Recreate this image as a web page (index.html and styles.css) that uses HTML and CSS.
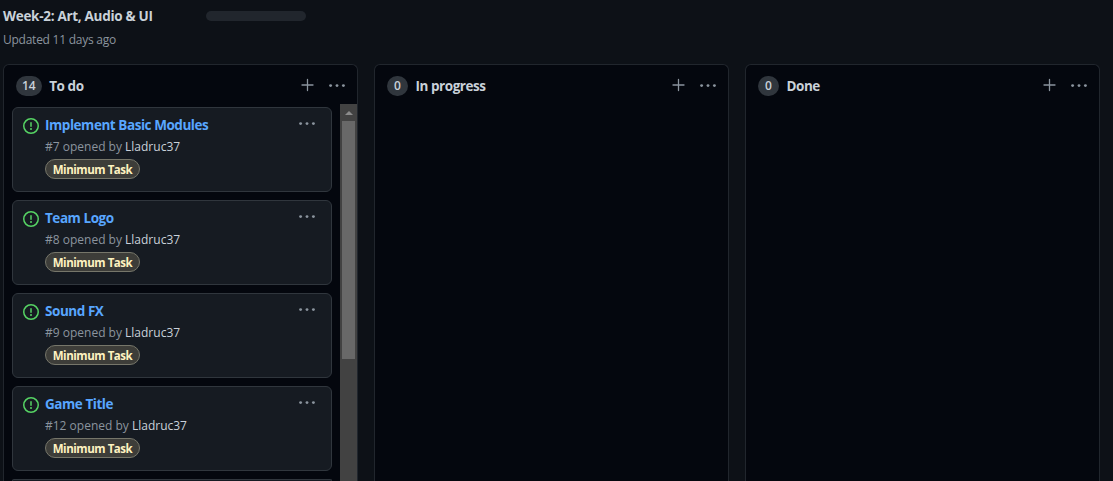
FILE: index.html
```html
<!DOCTYPE html>
<html lang="en">
<head>
<meta charset="utf-8">
<title>Week-2: Art, Audio &amp; UI</title>
<link rel="stylesheet" href="styles.css">
</head>
<body>
<svg class="defs" width="0" height="0" aria-hidden="true">
  <symbol id="plus" viewBox="0 0 16 16"><path d="M7.5 1.5v11M2 7h11" fill="none" stroke="currentColor" stroke-width="1.3" stroke-linecap="round"/></symbol>
  <symbol id="dots" viewBox="0 0 16 16"><circle cx="1.6" cy="7.6" r="1.45"/><circle cx="8" cy="7.6" r="1.45"/><circle cx="14.4" cy="7.6" r="1.45"/></symbol>
  <symbol id="issue" viewBox="0 0 16 16"><circle cx="8" cy="8" r="7.25" fill="none" stroke="currentColor" stroke-width="1.5"/><path d="M8 4.75v3.5" fill="none" stroke="currentColor" stroke-width="1.5" stroke-linecap="round"/><circle cx="8" cy="11" r="1"/></symbol>
</svg>
<header class="header">
  <div class="heading"><h1 class="title">Week-2: Art, Audio &amp; UI</h1><span class="progress"></span></div>
  <p class="updated">Updated 11 days ago</p>
</header>
<main class="board">
  <section class="column">
    <div class="column-head"><span class="count">14</span><h2 class="name">To do</h2><svg class="icon add"><use href="#plus"/></svg><svg class="icon"><use href="#dots"/></svg></div>
    <div class="list">
      <div class="cards">
        <article class="card"><svg class="issue"><use href="#issue"/></svg><div class="body"><h3 class="card-title">Implement Basic Modules</h3><p class="meta">#7 opened by <b class="author">Lladruc37</b></p><span class="label">Minimum Task</span></div><svg class="icon menu"><use href="#dots"/></svg></article>
        <article class="card"><svg class="issue"><use href="#issue"/></svg><div class="body"><h3 class="card-title">Team Logo</h3><p class="meta">#8 opened by <b class="author">Lladruc37</b></p><span class="label">Minimum Task</span></div><svg class="icon menu"><use href="#dots"/></svg></article>
        <article class="card"><svg class="issue"><use href="#issue"/></svg><div class="body"><h3 class="card-title">Sound FX</h3><p class="meta">#9 opened by <b class="author">Lladruc37</b></p><span class="label">Minimum Task</span></div><svg class="icon menu"><use href="#dots"/></svg></article>
        <article class="card"><svg class="issue"><use href="#issue"/></svg><div class="body"><h3 class="card-title">Game Title</h3><p class="meta">#12 opened by <b class="author">Lladruc37</b></p><span class="label">Minimum Task</span></div><svg class="icon menu"><use href="#dots"/></svg></article>
        <article class="card last"></article>
      </div>
      <div class="scrollbar"><span class="arrow"></span><span class="thumb"></span></div>
    </div>
  </section>
  <section class="column">
    <div class="column-head"><span class="count">0</span><h2 class="name">In progress</h2><svg class="icon add"><use href="#plus"/></svg><svg class="icon"><use href="#dots"/></svg></div>
  </section>
  <section class="column">
    <div class="column-head"><span class="count">0</span><h2 class="name">Done</h2><svg class="icon add"><use href="#plus"/></svg><svg class="icon"><use href="#dots"/></svg></div>
  </section>
</main>
</body>
</html>
```
FILE: styles.css
```css
* { box-sizing: border-box; margin: 0; padding: 0; }
body {
  height: 481px;
  overflow: hidden;
  display: flex;
  flex-direction: column;
  background: #0d1117;
  color: #c9d1d9;
  font-family: "Open Sans", "Noto Sans", sans-serif;
  font-size: 14px;
}
.defs { position: absolute; }
svg { display: block; flex: none; fill: currentColor; }
.header { height: 64px; flex: none; padding: 6px 0 0 3px; }
.heading { display: flex; align-items: center; height: 20px; }
.title { width: 203px; font-size: 13.5px; font-weight: 700; line-height: 20px; letter-spacing: -0.3px; white-space: nowrap; }
.progress { width: 100px; height: 10px; border-radius: 5px; background: #21262d; }
.updated { margin-top: 5px; font-size: 12px; line-height: 18px; color: #8b949e; letter-spacing: -0.25px; }
.board { flex: 1; min-height: 0; display: flex; gap: 16px; padding-left: 3px; }
.column {
  width: 355px;
  flex: none;
  display: flex;
  flex-direction: column;
  background: #04070e;
  border: 1px solid #21262d;
  border-bottom: 0;
  border-radius: 6px 6px 0 0;
}
.column-head { height: 39px; flex: none; display: flex; align-items: center; padding: 3px 12px 0; }
.count {
  min-width: 21px;
  height: 20px;
  padding: 0 6px;
  border-radius: 10px;
  background: #30363d;
  font-size: 12px;
  font-weight: 600;
  line-height: 20px;
  text-align: center;
}
.name { flex: 1; margin-left: 7.5px; font-size: 13.5px; font-weight: 700; line-height: 20px; letter-spacing: -0.45px; }
.icon { width: 16px; height: 16px; color: #8b949e; }
.add { margin-right: 13px; }
.list { flex: 1; min-height: 0; display: flex; justify-content: space-between; }
.cards { display: flex; flex-direction: column; gap: 8px; padding: 3px 0 0 8px; }
.card {
  width: 320px;
  height: 85px;
  flex: none;
  display: flex;
  padding: 7px 16px 0 10px;
  background: #161b22;
  border: 1px solid #30363d;
  border-radius: 6px;
}
.last { height: auto; flex: 1; min-height: 0; padding: 0; border-bottom: 0; border-radius: 6px 6px 0 0; }
.issue { width: 16px; height: 16px; margin: 3px 6px 0 0; color: #56d364; }
.body { flex: 1; }
.card-title { font-size: 13.5px; font-weight: 700; line-height: 20px; color: #58a6ff; letter-spacing: -0.45px; }
.meta { padding-top: 1px; font-size: 12px; line-height: 21px; color: #8b949e; letter-spacing: 0; }
.author { font-weight: 400; color: #c9d1d9; }
.label {
  display: block;
  width: 95px;
  height: 20px;
  margin-top: 2px;
  border: 1px solid #76766a;
  border-radius: 10px;
  background: #3d3d39;
  color: #fef2c0;
  font-size: 11.5px;
  font-weight: 700;
  line-height: 19px;
  letter-spacing: -0.45px;
  text-align: center;
  white-space: nowrap;
}
.menu { margin-top: 1px; }
.scrollbar { width: 17px; display: flex; flex-direction: column; align-items: center; background: #424242; }
.arrow { height: 17px; padding-top: 7px; }
.arrow::before { content: ""; display: block; border: 4px solid transparent; border-top: 0; border-bottom: 4px solid #8b8b8b; }
.thumb { width: 13px; height: 238px; background: #686868; }
```
